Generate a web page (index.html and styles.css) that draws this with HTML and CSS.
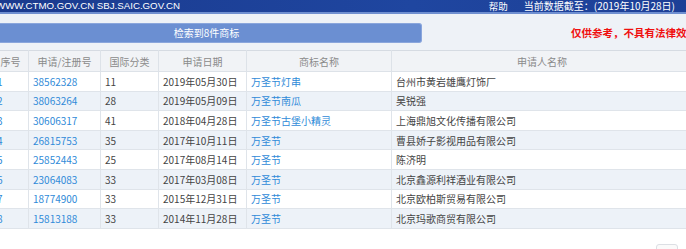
FILE: index.html
```html
<!DOCTYPE html>
<html lang="zh">
<head>
<meta charset="utf-8">
<link rel="stylesheet" href="styles.css">
</head>
<body>
<div class="page">
  <div class="topbar">
    <span class="site">WWW.CTMO.GOV.CN SBJ.SAIC.GOV.CN</span>
    <span class="help">帮助</span>
    <span class="date">当前数据截至：(2019年10月28日)</span>
  </div>
  <div class="toolbar">
    <div class="result-btn">检索到8件商标</div>
    <div class="notice">仅供参考，不具有法律效力</div>
  </div>
  <table class="grid">
    <colgroup>
      <col class="c1"><col class="c2"><col class="c3"><col class="c4"><col class="c5"><col class="c6">
    </colgroup>
    <thead>
      <tr><th>序号</th><th>申请/注册号</th><th>国际分类</th><th>申请日期</th><th>商标名称</th><th>申请人名称</th></tr>
    </thead>
    <tbody>
      <tr><td class="num">1</td><td class="link">38562328</td><td>11</td><td>2019年05月30日</td><td class="link">万圣节灯串</td><td>台州市黄岩雄鹰灯饰厂</td></tr>
      <tr><td class="num">2</td><td class="link">38063264</td><td>28</td><td>2019年05月09日</td><td class="link">万圣节南瓜</td><td>吴锐强</td></tr>
      <tr><td class="num">3</td><td class="link">30606317</td><td>41</td><td>2018年04月28日</td><td class="link">万圣节古堡小精灵</td><td>上海鼎旭文化传播有限公司</td></tr>
      <tr><td class="num">4</td><td class="link">26815753</td><td>35</td><td>2017年10月11日</td><td class="link">万圣节</td><td>曹县娇子影视用品有限公司</td></tr>
      <tr><td class="num">5</td><td class="link">25852443</td><td>25</td><td>2017年08月14日</td><td class="link">万圣节</td><td>陈济明</td></tr>
      <tr><td class="num">6</td><td class="link">23064083</td><td>33</td><td>2017年03月08日</td><td class="link">万圣节</td><td>北京鑫源利祥酒业有限公司</td></tr>
      <tr><td class="num">7</td><td class="link">18774900</td><td>33</td><td>2015年12月31日</td><td class="link">万圣节</td><td>北京欧柏斯贸易有限公司</td></tr>
      <tr><td class="num">8</td><td class="link">15813188</td><td>33</td><td>2014年11月28日</td><td class="link">万圣节</td><td>北京玛歌商贸有限公司</td></tr>
    </tbody>
  </table>
  <div class="pager">
    <span class="pager-info">共8条记录</span>
    <span class="pager-page">第1页</span>
    <span class="pager-count">1/1</span>
    <span class="pager-btn"></span>
  </div>
</div>
</body>
</html>
```
FILE: styles.css
```css
html, body {
  margin: 0;
  padding: 0;
  background: #ffffff;
  overflow: hidden;
}
body {
  font-family: "Noto Sans CJK SC", "Noto Sans", sans-serif;
  font-size: 10px;
  color: #444;
}
.page {
  margin-left: -8px;
  width: 700px;
}
.topbar {
  height: 12px;
  background: linear-gradient(to right, #1a3a8e, #1f46a0 60%, #1d3f96);
  border-bottom: 2px solid #6f8fd0;
  display: flex;
  align-items: center;
  color: #fff;
  font-size: 10px;
  line-height: 12px;
}
.site {
  font-family: "Liberation Sans", "Noto Sans", sans-serif;
  margin-left: 4px;
  font-size: 9.7px;
}
.help {
  margin-left: auto;
  font-size: 9.5px;
}
.date {
  margin-left: 16px;
  margin-right: 17px;
  font-size: 10px;
}
.toolbar {
  height: 36px;
  background: #eef2f7;
  display: flex;
  align-items: center;
  overflow: hidden;
}
.result-btn {
  flex: 0 0 430px;
  height: 20px;
  margin-top: 1px;
  background: #6b8fd2;
  border: 1px solid #8aa6dc;
  border-left: none;
  border-radius: 0 3px 3px 0;
  box-sizing: border-box;
  color: #fff;
  text-align: center;
  line-height: 18px;
  font-size: 10px;
}
.notice {
  flex: 0 0 auto;
  margin-left: 149px;
  color: #f01010;
  font-weight: bold;
  font-size: 10.5px;
  white-space: nowrap;
}
.grid {
  border-collapse: collapse;
  table-layout: fixed;
  width: 700px;
}
.c1 { width: 36px; }
.c2 { width: 72px; }
.c3 { width: 58px; }
.c4 { width: 88px; }
.c5 { width: 145px; }
.c6 { width: 301px; }
.grid th {
  height: 20px;
  background: #f1f3f6;
  color: #8a8a8a;
  font-weight: normal;
  text-align: center;
  border: 1px solid #dde2e8;
  border-top: 1px solid #d6dbe2;
  padding: 0;
  font-size: 10px;
}
.grid td {
  height: 18.6px;
  padding: 0 0 0 4px;
  border: 1px solid #dfe4ea;
  white-space: nowrap;
  overflow: hidden;
  font-size: 10px;
  color: #444;
}
.grid tbody tr:nth-child(even) td {
  background: #edf2f8;
}
.grid td.num {
  color: #2f8ad8;
}
.grid td.link {
  color: #2f8ad8;
}
.pager {
  height: 22px;
  display: flex;
  align-items: flex-end;
  font-size: 10px;
  line-height: 10px;
  padding-left: 8px;
  position: relative;
}
.pager span {
  position: relative;
  top: 9px;
}
.pager-info { color: #2f8ad8; }
.pager-page { margin-left: 12px; color: #2f8ad8; }
.pager-count { margin-left: 12px; color: #666; }
.pager-btn {
  margin-left: auto;
  margin-right: 14px;
  width: 20px;
  height: 14px;
  border: 1px solid #dcdfe4;
  border-radius: 3px;
  background: #fafafa;
}
```
